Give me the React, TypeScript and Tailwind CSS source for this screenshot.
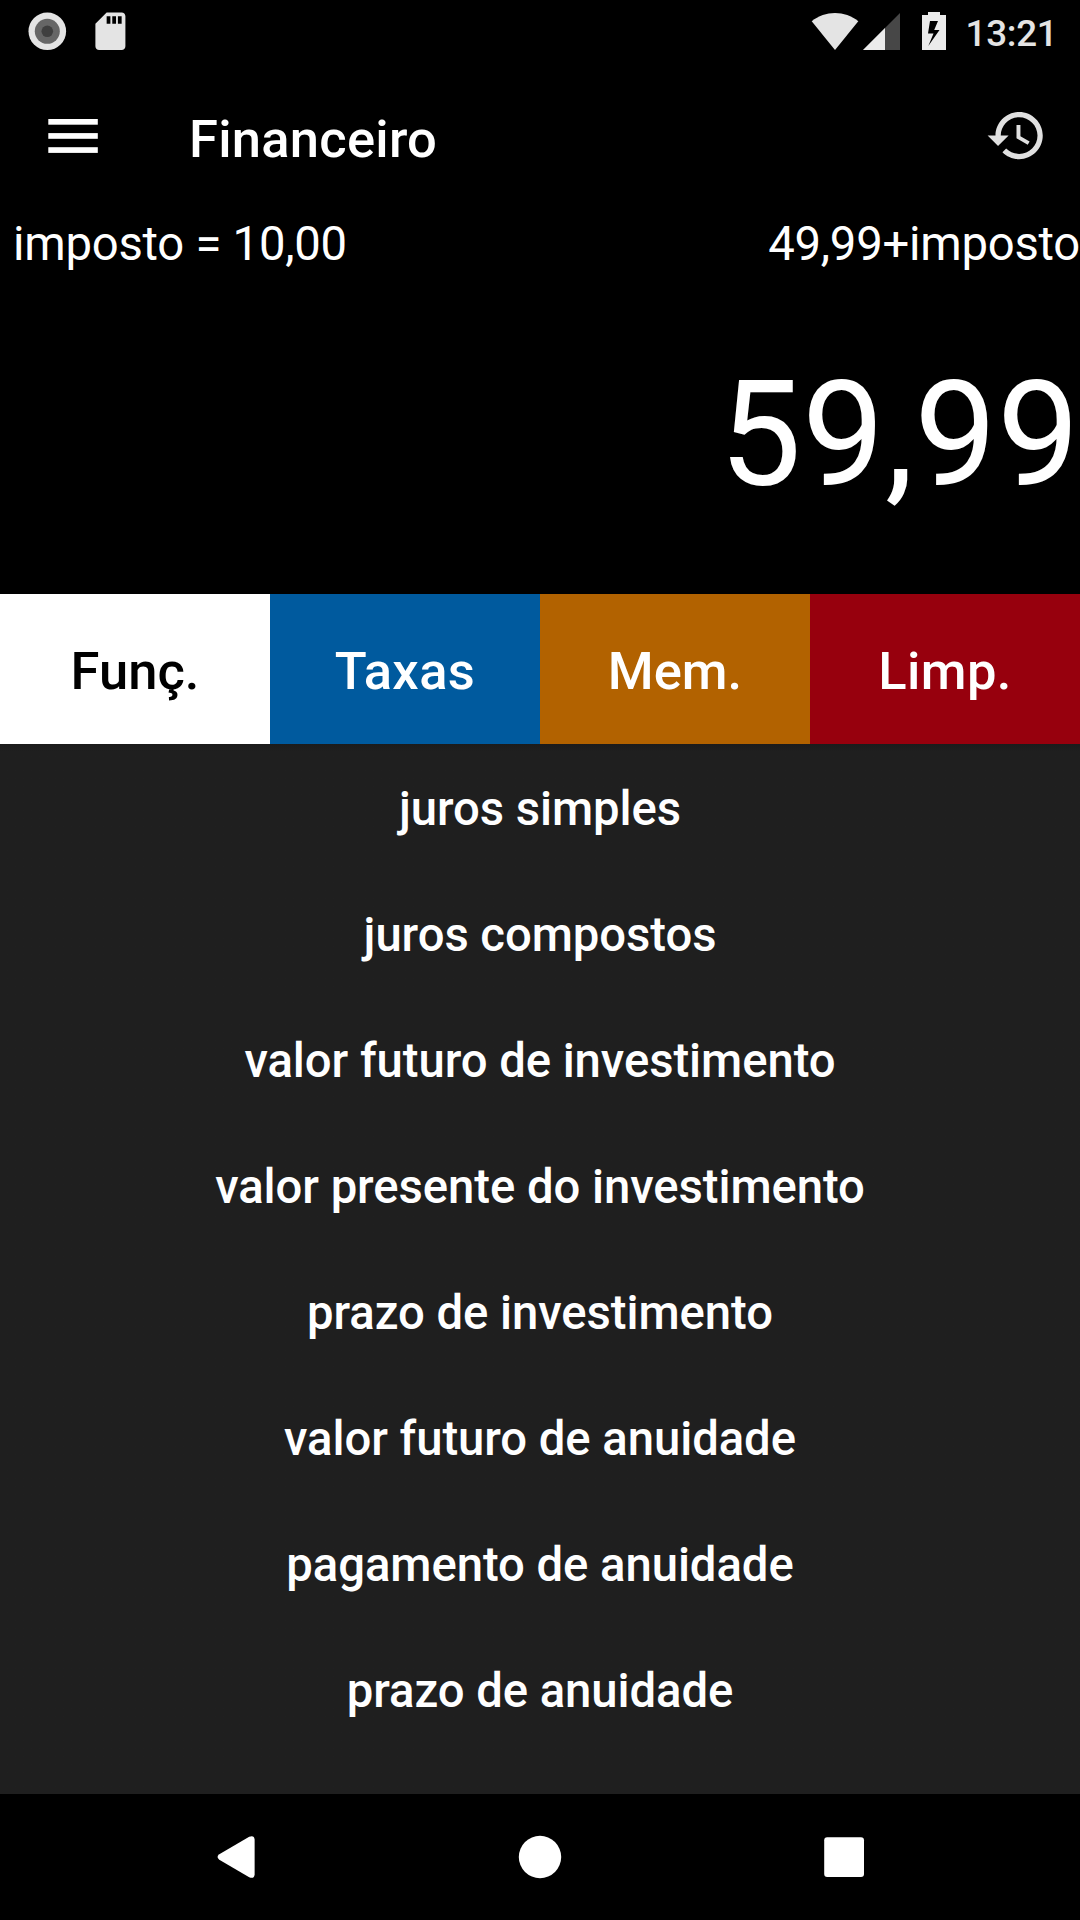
const TABS = [
  { label: "Funç.", className: "bg-white text-black" },
  { label: "Taxas", className: "bg-[#005a9e] text-white tracking-[0.4px]" },
  { label: "Mem.", className: "bg-[#b26200] text-white" },
  { label: "Limp.", className: "bg-[#97000d] text-white tracking-[0.4px]" },
];

const FUNCTIONS = [
  "juros simples",
  "juros compostos",
  "valor futuro de investimento",
  "valor presente do investimento",
  "prazo de investimento",
  "valor futuro de anuidade",
  "pagamento de anuidade",
  "prazo de anuidade",
];

function StatusBar() {
  return (
    <div className="flex h-[63px] items-start justify-between text-[#e4e4e4]">
      <svg width="140" height="63" viewBox="0 0 140 63">
        <circle cx="47.3" cy="31.3" r="18.8" fill="#e4e4e4" />
        <circle cx="47.3" cy="31.3" r="12.5" fill="#666666" />
        <circle cx="47.3" cy="31.3" r="5.8" fill="#3f3f3f" />
        <path
          transform="translate(87.9 8.75) scale(1.875)"
          fill="#e4e4e4"
          d="M18 2h-8L4 8v12c0 1.1.9 2 2 2h12c1.1 0 2-.9 2-2V4c0-1.1-.9-2-2-2zm-6 6h-2V4h2v4zm3 0h-2V4h2v4zm3 0h-2V4h2v4z"
        />
      </svg>
      <div className="flex">
        <svg width="160" height="63" viewBox="800 0 160 63">
          <path d="M811.7 21.3C825 10.3 845 10.3 858.3 21.3L835 50z" fill="#e4e4e4" />
          <path d="M863 50L900 13V50z" fill="#474747" />
          <path d="M863 50L885 28V50z" fill="#ebebeb" />
          <path
            fillRule="evenodd"
            fill="#ebebeb"
            d="M928 12h12v3h6v35h-24V15h6zM930 21l-2 12.500h5.500L928.300 46 939.500 30h-5.300L938 21z"
          />
        </svg>
        <span className="w-[120px] pt-[12px] pl-[5.5px] text-[36.75px] leading-[43px] font-medium tracking-[-0.25px]">
          13:21
        </span>
      </div>
    </div>
  );
}

function Toolbar() {
  return (
    <header className="flex h-[147px] items-center pr-[32px] pb-px pl-[48px]">
      <button type="button" aria-label="Menu">
        <svg width="50" height="34" viewBox="0 0 50 34" fill="#fff">
          <rect x="0.3" y="0" width="49.5" height="5.7" />
          <rect x="0.3" y="14.1" width="49.5" height="5.7" />
          <rect x="0.3" y="28.2" width="49.5" height="5.7" />
        </svg>
      </button>
      <h1 className="ml-[91px] flex-1 pt-[6px] text-[52.5px] leading-[62px] font-medium tracking-[0.25px]">
        Financeiro
      </h1>
      <button type="button" aria-label="Histórico" className="pb-px">
        <svg width="63" height="63" viewBox="0 0 24 24" fill="#e0e0e0">
          <path d="M13 3c-4.97 0-9 4.03-9 9H1l3.89 3.89.07.14L9 12H6c0-3.87 3.13-7 7-7s7 3.13 7 7-3.13 7-7 7c-1.93 0-3.68-.79-4.94-2.06l-1.42 1.42C8.27 19.99 10.51 21 13 21c4.97 0 9-4.03 9-9s-4.03-9-9-9zm-1 5v5l4.28 2.54.72-1.21-3.5-2.08V8H12z" />
        </svg>
      </button>
    </header>
  );
}

function Display() {
  return (
    <section className="h-[384px]">
      <div className="flex justify-between pt-[6px] pl-[13px] text-[47.25px] leading-[56px] tracking-[-0.25px]">
        <span>imposto = 10,00</span>
        <span>49,99+imposto</span>
      </div>
      <div className="pt-[77px] text-right text-[147px] leading-[172px] tracking-[0.3px]">
        59,99
      </div>
    </section>
  );
}

function NavBar() {
  return (
    <nav className="flex h-[126px] items-center bg-black">
      <svg width="1080" height="126" viewBox="0 0 1080 126" fill="#fff">
        <path d="M219.3 60.3L249.2 42.7Q254.3 40.8 254.6 45.5V80.5Q254.3 85.2 249.2 83.3L219.3 65.7Q215.8 63 219.3 60.3z" />
        <circle cx="540" cy="63" r="21.2" />
        <rect x="824.2" y="43.2" width="39.8" height="39.7" rx="3" />
      </svg>
    </nav>
  );
}

export default function App() {
  return (
    <main className="flex h-[1920px] w-[1080px] flex-col overflow-hidden bg-black font-[Roboto,sans-serif] text-white">
      <StatusBar />
      <Toolbar />
      <Display />
      <div className="grid h-[150px] grid-cols-4">
        {TABS.map((tab) => (
          <button
            key={tab.label}
            type="button"
            className={`pt-[4px] text-[52.5px] leading-[62px] font-medium ${tab.className}`}
          >
            {tab.label}
          </button>
        ))}
      </div>
      <ul className="flex-1 bg-[#1f1f1f] bg-linear-to-b from-[#1b1b1b] to-[#1f1f1f] to-[8px] pt-[2px]">
        {FUNCTIONS.map((name) => (
          <li
            key={name}
            className="flex h-[126px] items-center justify-center text-[47.25px] leading-[56px] font-medium tracking-[-0.06px]"
          >
            {name}
          </li>
        ))}
      </ul>
      <NavBar />
    </main>
  );
}
